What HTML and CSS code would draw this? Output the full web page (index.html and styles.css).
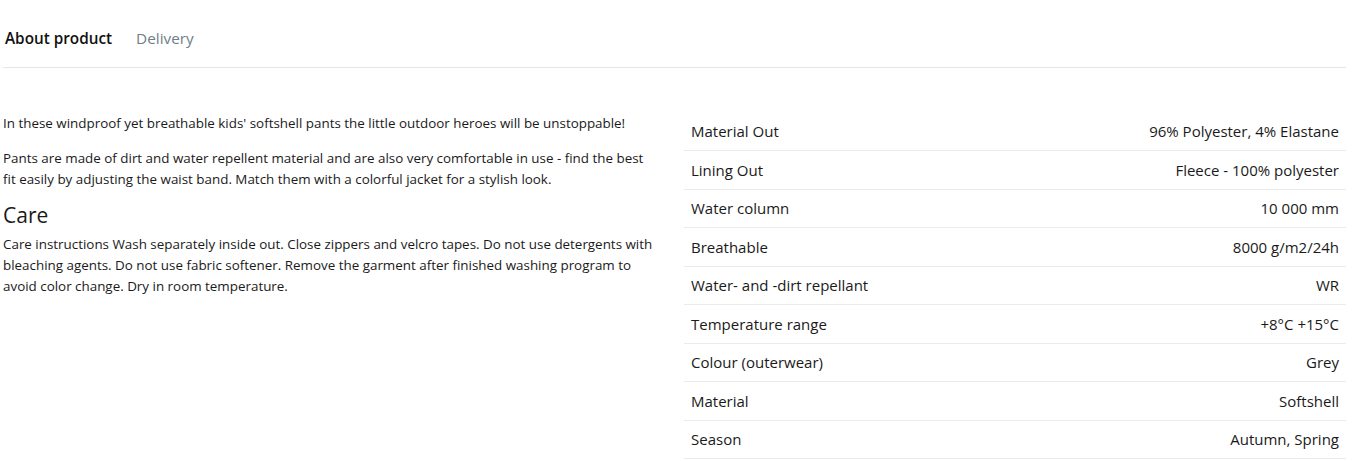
FILE: index.html
```html
<!DOCTYPE html>
<html lang="en">
<head>
  <meta charset="UTF-8" />
  <meta name="viewport" content="width=device-width, initial-scale=1" />
  <title>Product details</title>
  <link rel="stylesheet" href="styles.css">
</head>
<body>
  <!-- Tabs -->
  <div class="tabs">
    <div class="tab active">About product</div>
    <div class="tab">Delivery</div>
  </div>

  <!-- Tab content -->
  <div class="content">
    <div class="description">
      <p>In these windproof yet breathable kids' softshell pants the little outdoor heroes will be unstoppable!</p>
      <p>Pants are made of dirt and water repellent material and are also very comfortable in use - find the best fit easily by adjusting the waist band. Match them with a colorful jacket for a stylish look.</p>
      <h3>Care</h3>
      <p>Care instructions Wash separately inside out. Close zippers and velcro tapes. Do not use detergents with bleaching agents. Do not use fabric softener. Remove the garment after finished washing program to avoid color change. Dry in room temperature.</p>
    </div>

    <table class="specs">
      <tr><td>Material Out</td><td>96% Polyester, 4% Elastane</td></tr>
      <tr><td>Lining Out</td><td>Fleece - 100% polyester</td></tr>
      <tr><td>Water column</td><td>10 000 mm</td></tr>
      <tr><td>Breathable</td><td>8000 g/m2/24h</td></tr>
      <tr><td>Water- and -dirt repellant</td><td>WR</td></tr>
      <tr><td>Temperature range</td><td>+8°C +15°C</td></tr>
      <tr><td>Colour (outerwear)</td><td>Grey</td></tr>
      <tr><td>Material</td><td>Softshell</td></tr>
      <tr><td>Season</td><td>Autumn, Spring</td></tr>
    </table>
  </div>
</body>
</html>
```

FILE: styles.css
```css
* {
  box-sizing: border-box;
  margin: 0;
  padding: 0;
}
html, body {
  background: #fff;
  color: #1a1a1a;
  font-family: "Open Sans", sans-serif;
  overflow: hidden;
}
body {
  padding: 0 20px 0 3px;
}
/* Tabs row */
.tabs {
  display: flex;
  gap: 24px;
  height: 68px;
  align-items: center;
  padding: 9px 2px 0 2px;
  border-bottom: 1px solid #e6e6e6;
}
.tab {
  font-size: 15.3px;
  color: #6f7d87;
}
.tab.active {
  color: #111;
  font-weight: 600;
}
/* Content: description left, specs table right */
.content {
  display: flex;
  gap: 19px;
  padding-top: 45px;
}
.description {
  flex: 0 0 662px;
  padding-right: 7px;
  font-size: 13.4px;
  line-height: 21px;
}
.description p {
  margin-bottom: 14px;
}
.description h3 {
  font-size: 21px;
  font-weight: 400;
  line-height: 26px;
  margin-top: -2px;
  margin-bottom: 6px;
}
.specs {
  flex: 1;
  border-collapse: collapse;
  font-size: 15px;
  margin-top: -1px;
}
.specs td {
  height: 38.5px;
  padding: 0 7px;
  border-bottom: 1px solid #ebebeb;
}
.specs td:last-child {
  text-align: right;
}
```
